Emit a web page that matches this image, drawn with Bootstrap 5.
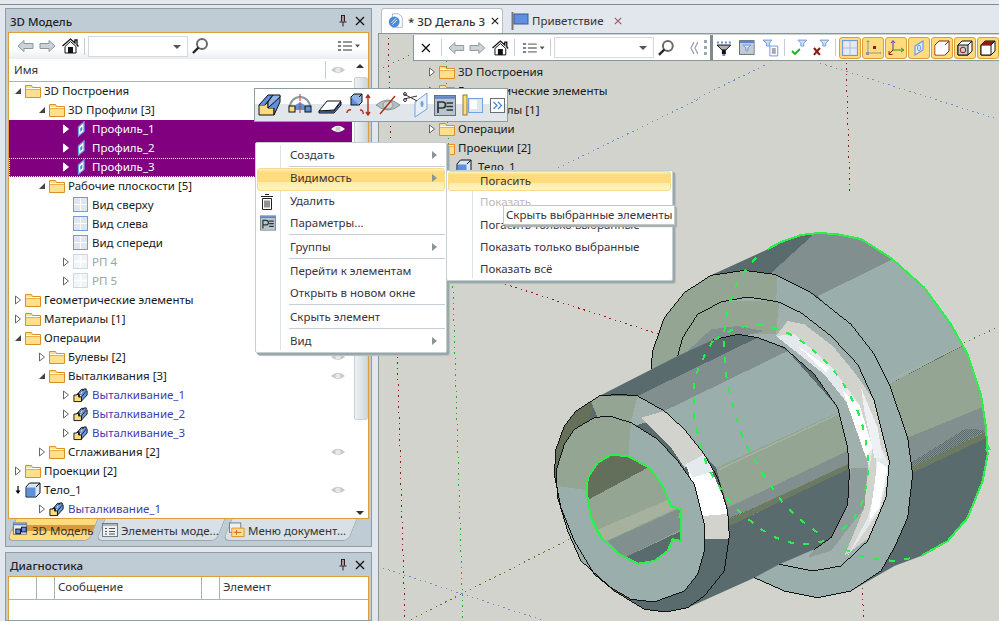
<!DOCTYPE html>
<html lang="ru">
<head>
<meta charset="utf-8">
<title>3D Модель</title>
<link href="https://cdn.jsdelivr.net/npm/bootstrap@5.3.0/dist/css/bootstrap.min.css" rel="stylesheet">
<style>
html,body{margin:0;height:621px;overflow:hidden}
body{position:relative;width:999px;background:#e1e7ec;font:11.5px/19px "Noto Sans",sans-serif;color:#1a1a1a}
.sprite{position:absolute;width:0;height:0}
.topline{height:5px;background:#e4e9ed;border-bottom:1px solid #7f8b8f}
.mainarea{height:616px}
.leftcol{width:378px;padding:3px 6px 0 5px;flex:none}
.rightcol{flex:1;padding-top:3px;min-width:0}
.pane{border:1px solid #8e9da2;background:#bfccd6;padding:0 2px;overflow:hidden}
.pane1{height:539px}
.pane2{height:69px;margin-top:5px}
.pane2 .orangebox{height:46px;border-bottom:0}
.panehead{height:23px;font-weight:500;padding:1px 4px 0 2px;color:#222}
.panehead svg{margin-left:8px}
.orangebox{border:1px solid #dc9d3c;background:#fff;height:487px;position:relative;overflow:hidden}
.tb1{height:26px;background:linear-gradient(#fff 0,#fff 60%,#e9edf0 100%)}
.sepv{width:1px;height:17px;background:#c4ced3;flex:none}
.combo{border:1px solid #d3d9dc;height:21px;width:100px;flex:none;background:#fff;position:relative}
.combo::after{content:"";position:absolute;right:6px;top:8px;border:4px solid transparent;border-top-color:#555;border-bottom:0}
.sp2{margin-left:2px}.sp3{margin-left:3px}.sp4{margin-left:4px}.sp5{margin-left:5px}.sp6{margin-left:6px}.sp7{margin-left:7px}.sp8{margin-left:8px}.sp10{margin-left:10px}.sp16{margin-left:16px}
.namehead{height:23px;border-bottom:1px solid #a7b5b5;width:343px;padding-left:5px;padding-bottom:1px;color:#333}
.namehead .sepv{height:18px;margin-left:auto;margin-right:4px}
.namehead svg{margin-right:6px}
.treebox{width:343px}
.treerow{height:19px;display:flex;align-items:center;white-space:nowrap;padding-left:calc(1px + 24px*var(--lv));padding-bottom:2px}
.arrowbox{width:15px;height:17px;flex:none;display:flex;align-items:center;justify-content:center}
.treerow .ico{flex:none;margin-right:3px}
.eyeico{margin-left:auto;margin-right:6px;flex:none}
.selrow{background:#800080;color:#fff}
.focusrow{outline:1px dotted #fff;outline-offset:-1px}
.linked{color:#3d3daf}
.greyed{color:#9aa4a8}
.vscroll{position:absolute;left:343px;top:26px;width:17px;bottom:0;background:#fff}
.vthumb{position:absolute;left:2px;top:18px;width:14px;height:343px;background:linear-gradient(90deg,#eef1f3,#dfe5e8 50%,#cfd7da);border:1px solid #c9d2d6;border-radius:2px}
.vup,.vdown{position:absolute;left:4px;border:4px solid transparent}
.vup{top:5px;border-bottom-color:#333;border-top:0}
.vdown{bottom:3px;border-top-color:#333;border-bottom:0}
.tabstrip{height:23px;position:relative;z-index:1}
.btab{position:relative;height:22px;display:flex;align-items:center;gap:3px;padding-left:5px;white-space:nowrap;color:#333;flex:none}
.btab::before{content:"";position:absolute;inset:0 3px 0 3px;transform:skewX(-22deg);background:#d9e1e6;border:1px solid #9aa9ad;border-top:0;border-radius:0 0 6px 6px;z-index:-1}
.btab.act::before{background:linear-gradient(#fedc7e 0,#fedc7e 30%,#d99a3f 30%,#d99a3f 55%,#fedc7e 55%)}
.bt1{width:89px}.bt2{width:127px}.bt3{width:132px}
.diaghead{height:23px;border-bottom:1px solid #a7b5b5;color:#333}
.diaghead div{border-right:1px solid #a7b5b5;height:22px;padding-left:3px;flex:none}
.dc1{width:28px}.dc2{width:18px}.dc3{width:147px}
.doctabs{height:25px;background:#e1e7ec;padding-left:3px;gap:3px}
.dtab{height:25px;display:flex;align-items:center;gap:3px;white-space:nowrap;color:#333;flex:none;padding:0 6px 0 5px}
.dtab.act{background:#fff;border:1px solid #b4c0c4;border-bottom:0;border-radius:3px 3px 0 0;width:122px;margin-top:1px;font-weight:500;padding-right:3px}
.canvasarea{position:relative;height:588px;background:#d2d3cd;border-top:1px solid #8a979a;border-left:1px solid #8a979a;overflow:hidden}
.canvasart{position:absolute;left:0;top:0;shape-rendering:crispEdges}
.tb2{position:absolute;left:34px;top:1px;right:0;height:26px;background:#fff;border-left:1px solid #8a979a;border-bottom:1px solid #8a979a;overflow:hidden}
.thicksep{width:3px;height:26px;background:#7f8b8e;flex:none}
.orbtn{width:22px;height:22px;flex:none;background:#fedc7e;border:1px solid #dd9d3a;border-radius:3px;display:flex;align-items:center;justify-content:center}
.orgroup{gap:1px}
.canvastree{position:absolute;left:45px;top:28px;width:240px}
.canvastree .treerow{padding-left:0;padding-bottom:0}
.canvastree .arrowbox{height:19px}
.arrowwide{width:17px}
.minibar{position:absolute;left:254px;top:88px;width:254px;height:34px;background:linear-gradient(#fff 0,#fff 47%,#e0e6ea 47%);border:1px solid #8e9da2;z-index:5}
.ctxmenu{position:absolute;background:#fff;border:1px solid #c5ced3;border-radius:2px;box-shadow:2px 2px 0 #9aa7a9,3px 3px 1px #b6bfc0;z-index:4;color:#3a3340}
.ctx1{left:255px;top:142px;width:192px;height:211px}
.ctx2{left:446px;top:170px;width:227px;height:111px;z-index:6}
.gutter{position:absolute;top:2px;bottom:2px;width:1px;background:#dde4e8}
.ctx1 .gutter{left:24px}
.ctx2 .gutter{left:25px}
.mitem{position:absolute;left:34px;white-space:nowrap;height:19px}
.ctx2 .mitem{left:33px}
.msep{position:absolute;left:33px;right:1px;height:1px;background:#c5d0d6}
.msub{position:absolute;right:9px;border:4px solid transparent;border-left:5px solid #8a9599;border-right:0}
.hlrow{position:absolute;left:1px;right:1px;background:linear-gradient(#fff0bd 0,#fedc7e 15%,#fedc7e 60%,#ffeaa8 60%,#fff3c8);border:1px solid #fbd98a;border-radius:3px}
.ctip{position:absolute;left:503px;top:205px;width:172px;height:20px;background:#fff;border:1px solid #c5c5c5;box-shadow:2px 2px 1px #a9b0b0;z-index:7;padding-left:2px;white-space:nowrap;color:#3a3340;line-height:18px}
.mico{position:absolute;left:4px}
.r1{top:2px}.r2{top:25px}.r3{top:48px}.r4{top:70px}.r5{top:94px}.r6{top:118px}.r7{top:140px}.r8{top:164px}.r9{top:188px}
.a1{top:8px}.a2{top:31px}.a5{top:100px}.a9{top:194px}
.s1{top:23px}.s2{top:91px}.s3{top:115px}.s4{top:161px}.s5{top:185px}
.h1{top:25px;height:23px}.h2{top:0;height:20px}
.i1{top:50px}.i2{top:72px}
.q1{top:0}.q2{top:21px;color:#bbb}.q3{top:44px}.q4{top:66px}.q5{top:88px}
.c-red{stroke:#8a1f10}.c-lime{stroke:#1fb01f}.c-olive{stroke:#4f7a2f}.c-blue{stroke:#6f8ec8}
</style>
</head>
<body>
<svg class="sprite" aria-hidden="true">
<defs>
<symbol id="i-folder" viewBox="0 0 16 14"><path d="M.5 1.500h6l1 2h8v10H.5z" fill="#fedf8e" stroke="#dc8f24"/><path d="M1 4.500h14" stroke="#fff"/><path d="M1 5.500h14" stroke="#dc8f24" opacity=".6"/></symbol>
<symbol id="i-prof" viewBox="0 0 16 16"><path d="M5.500 6 11 1v9.500L5.500 15z" fill="#fff" stroke="#6ea3e8" stroke-width="1.300"/><path d="M7.300 7.500 9.300 5.500v3.500L7.300 11z" fill="#3f78d0"/></symbol>
<symbol id="i-plane" viewBox="0 0 16 16"><rect x=".5" y=".5" width="14" height="14" fill="#dfe6ed" stroke="#6f9be5"/><path d="M7.500 1v13M1 7.500h13" stroke="#fff"/></symbol>
<symbol id="i-planeg" viewBox="0 0 16 16"><rect x=".5" y=".5" width="14" height="14" fill="#f1f4f6" stroke="#cfd8de"/><path d="M7.500 1v13M1 7.500h13" stroke="#fff" stroke-width="1.500"/></symbol>
<symbol id="i-extr" viewBox="0 0 17 16"><path d="M1 8h3l2-2v4h3v5H1z" fill="#fedc7e" stroke="#111"/><path d="M4 8 9 2h3l-5 6v2H6V6z" fill="#6b98dc" stroke="#111"/><path d="M9 10 14 4V1.500h-2L7.500 7M9 10v4.500L15 8V3.500" fill="#6b98dc" stroke="#111"/><path d="M10 4 8 7" stroke="#fff"/></symbol>
<symbol id="i-cube" viewBox="0 0 16 16"><path d="M1 5h10v10H1z" fill="#5f90d9" stroke="#111"/><path d="M1 5l3.500-4H15v10l-4 4M11 5l4-4" fill="#dbe6f4" stroke="#111"/><path d="M1.500 5.500h9v9h-9z" fill="#5f90d9"/></symbol>
<symbol id="i-eye" viewBox="0 0 16 10"><path d="M1 5q7-6.500 14 0-7 6.500-14 0z" fill="#c6cbc5"/><circle cx="8" cy="5" r="2.600" fill="#e6e9e3"/></symbol>
<symbol id="i-eyew" viewBox="0 0 16 10"><path d="M1 5q7-6.500 14 0-7 6.500-14 0z" fill="#fff"/><circle cx="8" cy="5" r="2.600" fill="#c9cfc9"/></symbol>
<symbol id="i-closed" viewBox="0 0 8 10"><path d="M1.500 1v8L6.500 5z" fill="#fff" stroke="#666"/></symbol>
<symbol id="i-closedw" viewBox="0 0 8 10"><path d="M1.500 1v8L6.500 5z" fill="#fff" stroke="#fff"/></symbol>
<symbol id="i-open" viewBox="0 0 8 10"><path d="M1 8h6V2z" fill="#444"/></symbol>
<symbol id="i-down" viewBox="0 0 8 10"><path d="M4 1v6" stroke="#000" stroke-width="1.200"/><path d="M1.500 5.500h5L4 9z" fill="#000"/></symbol>
<symbol id="i-back" viewBox="0 0 17 14"><path d="M1 7l6-5.500V4.500h9v5H7v3z" fill="#cbd3d8" stroke="#8c989c"/></symbol>
<symbol id="i-fwd" viewBox="0 0 17 14"><path d="M16 7l-6-5.500V4.500H1v5h9v3z" fill="#cbd3d8" stroke="#8c989c"/></symbol>
<symbol id="i-home" viewBox="0 0 17 16"><path d="M.5 8 8.500 1 13 5V2h2v5l1.500 1.500" fill="none" stroke="#111" stroke-width="1.300"/><path d="M3 8.500 8.500 3.500 14 8.500V15H3z" fill="#fff" stroke="#111"/><path d="M6 9h5v6H6z" fill="#111"/></symbol>
<symbol id="i-search" viewBox="0 0 18 18"><circle cx="11" cy="7" r="5" fill="#fff" stroke="#6a6a6a" stroke-width="2"/><path d="M7.500 10.500 2 16" stroke="#222" stroke-width="2.400"/></symbol>
<symbol id="i-list" viewBox="0 0 23 12"><path d="M1 2h3M1 6h3M1 10h3" stroke="#555" stroke-width="1.500"/><path d="M6 2h9M6 6h9M6 10h9" stroke="#777" stroke-width="1.300"/><path d="M18 4.500h5L20.500 7.500z" fill="#555"/></symbol>
<symbol id="i-close" viewBox="0 0 10 10"><path d="M1 1l8 8M9 1 1 9" stroke="#111" stroke-width="1.300"/></symbol>
<symbol id="i-pin" viewBox="0 0 8 12"><path d="M2 .5h4M2.500 .5v6M5.500 .5v6M.5 7h7M4 7v4.500" stroke="#222" fill="none"/><path d="M4 1v5.500" stroke="#d44"/></symbol>
<symbol id="i-pe" viewBox="0 0 22 21"><rect x=".5" y=".5" width="21" height="20" fill="#b9c4ca" stroke="#65727a"/><path d="M1 2.500h20" stroke="#5a84d0" stroke-width="2.500"/><path d="M4 18V7h4.500a2.500 2.500 0 0 1 0 6H4.500M12.500 8H19M12.500 11.500H19M12.500 15H19" fill="none" stroke="#2c353a" stroke-width="1.700"/></symbol>
<symbol id="i-trash" viewBox="0 0 14 17"><path d="M5 1.500h4M1 3.500h12M2.500 5.500h9v11h-9zM5 7.500v7M7 7.500v7M9 7.500v7" fill="none" stroke="#222"/></symbol>
<symbol id="i-cfilter" viewBox="0 0 16 16"><path d="M1 2.500h14" stroke="#5f90d9" stroke-width="2" stroke-dasharray="2 2"/><path d="M1 5h14L10 10H6z" fill="#aab0ae" stroke="#111"/><path d="M6 10h4v4H6z" fill="#111"/><path d="M6.500 15h3" stroke="#5f90d9" stroke-width="2"/></symbol>
<symbol id="i-filter2" viewBox="0 0 16 16"><rect x=".5" y=".5" width="15" height="14" fill="#c5ccd0" stroke="#65727a"/><path d="M1 2h14" stroke="#5a84d0" stroke-width="2"/><path d="M4 5h8L9 8v3H7V8z" fill="#d6e0ea" stroke="#6f9be5"/></symbol>
<symbol id="i-filter3" viewBox="0 0 18 18"><path d="M1 1h9L7.500 4v3h-3V4z" fill="#d6e0ea" stroke="#6f9be5"/><path d="M8 7h8v10H8z" fill="#fff" stroke="#6f9be5"/><path d="M10 10h4M10 12h4M10 14h4" stroke="#555"/></symbol>
<symbol id="i-fcheck" viewBox="0 0 18 18"><path d="M7 1h9l-3 3v3h-3V4z" fill="#d6e0ea" stroke="#6f9be5"/><path d="M1 12l3 3 5-5" fill="none" stroke="#1fb51f" stroke-width="2"/></symbol>
<symbol id="i-fx" viewBox="0 0 18 18"><path d="M8 1h9l-3 3v3h-3V4z" fill="#d6e0ea" stroke="#6f9be5"/><path d="M2 9l6 7M8 9l-6 7" stroke="#8a1f10" stroke-width="2.200"/></symbol>
<symbol id="v-top" viewBox="0 0 16 16"><rect x=".5" y=".5" width="15" height="15" fill="#e4eaef" stroke="#6f9be5" stroke-width="1.200"/><path d="M8 1v14M1 8h14" stroke="#6f9be5" opacity=".5"/></symbol>
<symbol id="v-axis" viewBox="0 0 16 16"><path d="M3 13V2M3 13h12" stroke="#8c989c"/><path d="M1 2h4L3 0zM15 11v4l1-2z" fill="#8c989c"/><path d="M1 12h3v3H1z" fill="#8c989c"/><rect x="8" y="6" width="3" height="3" fill="#8a1f10"/></symbol>
<symbol id="v-xyz" viewBox="0 0 16 16"><path d="M5 10V2" stroke="#4a3aa8"/><path d="M3 3l2-2.500L7 3" fill="none" stroke="#4a3aa8"/><path d="M5 10h10" stroke="#2f962f"/><path d="M13 8l3 2-3 2" fill="none" stroke="#2f962f"/><path d="M5 10 1 14M1 11v3.500h3.500" fill="none" stroke="#8a1f10"/></symbol>
<symbol id="v-pln" viewBox="0 0 16 16"><path d="M4 6l8-5v9l-8 5z" fill="#e4eaef" stroke="#6f9be5" stroke-width="1.200"/><ellipse cx="8" cy="8" rx="1.500" ry="3" fill="none" stroke="#6f9be5"/></symbol>
<symbol id="v-cb1" viewBox="0 0 16 16"><path d="M1 5h10v10H1z" fill="#fff" stroke="#8a1f10"/><path d="M1 5l4-4h10v10l-4 4M11 5l4-4" fill="#fff" stroke="#8a1f10"/><path d="M1.500 5.500h9v9h-9z" fill="#fff"/></symbol>
<symbol id="v-cb2" viewBox="0 0 16 16"><path d="M5 1h10v10l-4 4H1V5z" fill="#fff" stroke="#111"/><path d="M1 5h10v10H1z" fill="#c7cdcf" stroke="#111"/><circle cx="6" cy="10" r="2.800" fill="none" stroke="#8a1f10"/><path d="M11 5l4-4" stroke="#111"/></symbol>
<symbol id="v-cb3" viewBox="0 0 16 16"><path d="M5 1h10v10l-4 4H1V5z" fill="#fff" stroke="#111"/><path d="M1 5h10v10H1z" fill="#fff" stroke="#111"/><path d="M5 1h10L11 5H1z" fill="#8a1f10"/><path d="M11 5l4-4" stroke="#111"/></symbol>
</defs>
</svg>

<div class="topline"></div>
<div class="mainarea d-flex">
  <div class="leftcol">
    <div class="pane pane1">
      <div class="panehead d-flex align-items-center"><span class="flex-grow-1">3D Модель</span><svg width="8" height="12"><use href="#i-pin"/></svg><svg width="10" height="10"><use href="#i-close"/></svg></div>
      <div class="orangebox">
        <div class="tb1 d-flex align-items-center">
          <svg class="sp8" width="17" height="14"><use href="#i-back"/></svg>
          <svg class="sp5" width="17" height="14"><use href="#i-fwd"/></svg>
          <svg class="sp6" width="17" height="16"><use href="#i-home"/></svg>
          <span class="sepv sp5"></span>
          <div class="combo sp3"></div>
          <svg class="sp3" width="18" height="18"><use href="#i-search"/></svg>
          <svg class="ms-auto me-2" width="23" height="12"><use href="#i-list"/></svg>
        </div>
        <div class="namehead d-flex align-items-center"><span>Имя</span><span class="sepv"></span><svg width="16" height="10"><use href="#i-eye"/></svg></div>
        <div class="treebox">
          <div class="treerow" style="--lv:0"><span class="arrowbox"><svg width="8" height="10"><use href="#i-open"/></svg></span><svg class="ico" width="16" height="14"><use href="#i-folder"/></svg>3D Построения</div>
          <div class="treerow" style="--lv:1"><span class="arrowbox"><svg width="8" height="10"><use href="#i-open"/></svg></span><svg class="ico" width="16" height="14"><use href="#i-folder"/></svg>3D Профили [3]</div>
          <div class="treerow selrow" style="--lv:2"><span class="arrowbox"><svg width="8" height="10"><use href="#i-closedw"/></svg></span><svg class="ico" width="16" height="16"><use href="#i-prof"/></svg>Профиль_1<svg class="eyeico" width="16" height="10"><use href="#i-eyew"/></svg></div>
          <div class="treerow selrow" style="--lv:2"><span class="arrowbox"><svg width="8" height="10"><use href="#i-closedw"/></svg></span><svg class="ico" width="16" height="16"><use href="#i-prof"/></svg>Профиль_2</div>
          <div class="treerow selrow focusrow" style="--lv:2"><span class="arrowbox"><svg width="8" height="10"><use href="#i-closedw"/></svg></span><svg class="ico" width="16" height="16"><use href="#i-prof"/></svg>Профиль_3</div>
          <div class="treerow" style="--lv:1"><span class="arrowbox"><svg width="8" height="10"><use href="#i-open"/></svg></span><svg class="ico" width="16" height="14"><use href="#i-folder"/></svg>Рабочие плоскости [5]</div>
          <div class="treerow" style="--lv:2"><span class="arrowbox"></span><svg class="ico" width="16" height="16"><use href="#i-plane"/></svg>Вид сверху</div>
          <div class="treerow" style="--lv:2"><span class="arrowbox"></span><svg class="ico" width="16" height="16"><use href="#i-plane"/></svg>Вид слева</div>
          <div class="treerow" style="--lv:2"><span class="arrowbox"></span><svg class="ico" width="16" height="16"><use href="#i-plane"/></svg>Вид спереди</div>
          <div class="treerow greyed" style="--lv:2"><span class="arrowbox"><svg width="8" height="10"><use href="#i-closed"/></svg></span><svg class="ico" width="16" height="16"><use href="#i-planeg"/></svg>РП 4</div>
          <div class="treerow greyed" style="--lv:2"><span class="arrowbox"><svg width="8" height="10"><use href="#i-closed"/></svg></span><svg class="ico" width="16" height="16"><use href="#i-planeg"/></svg>РП 5</div>
          <div class="treerow" style="--lv:0"><span class="arrowbox"><svg width="8" height="10"><use href="#i-closed"/></svg></span><svg class="ico" width="16" height="14"><use href="#i-folder"/></svg>Геометрические элементы</div>
          <div class="treerow" style="--lv:0"><span class="arrowbox"><svg width="8" height="10"><use href="#i-closed"/></svg></span><svg class="ico" width="16" height="14"><use href="#i-folder"/></svg>Материалы [1]</div>
          <div class="treerow" style="--lv:0"><span class="arrowbox"><svg width="8" height="10"><use href="#i-open"/></svg></span><svg class="ico" width="16" height="14"><use href="#i-folder"/></svg>Операции</div>
          <div class="treerow" style="--lv:1"><span class="arrowbox"><svg width="8" height="10"><use href="#i-closed"/></svg></span><svg class="ico" width="16" height="14"><use href="#i-folder"/></svg>Булевы [2]<svg class="eyeico" width="16" height="10"><use href="#i-eye"/></svg></div>
          <div class="treerow" style="--lv:1"><span class="arrowbox"><svg width="8" height="10"><use href="#i-open"/></svg></span><svg class="ico" width="16" height="14"><use href="#i-folder"/></svg>Выталкивания [3]<svg class="eyeico" width="16" height="10"><use href="#i-eye"/></svg></div>
          <div class="treerow linked" style="--lv:2"><span class="arrowbox"><svg width="8" height="10"><use href="#i-closed"/></svg></span><svg class="ico" width="16" height="16"><use href="#i-extr"/></svg>Выталкивание_1</div>
          <div class="treerow linked" style="--lv:2"><span class="arrowbox"><svg width="8" height="10"><use href="#i-closed"/></svg></span><svg class="ico" width="16" height="16"><use href="#i-extr"/></svg>Выталкивание_2</div>
          <div class="treerow linked" style="--lv:2"><span class="arrowbox"><svg width="8" height="10"><use href="#i-closed"/></svg></span><svg class="ico" width="16" height="16"><use href="#i-extr"/></svg>Выталкивание_3</div>
          <div class="treerow" style="--lv:1"><span class="arrowbox"><svg width="8" height="10"><use href="#i-closed"/></svg></span><svg class="ico" width="16" height="14"><use href="#i-folder"/></svg>Сглаживания [2]<svg class="eyeico" width="16" height="10"><use href="#i-eye"/></svg></div>
          <div class="treerow" style="--lv:0"><span class="arrowbox"><svg width="8" height="10"><use href="#i-closed"/></svg></span><svg class="ico" width="16" height="14"><use href="#i-folder"/></svg>Проекции [2]</div>
          <div class="treerow" style="--lv:0"><span class="arrowbox"><svg width="8" height="10"><use href="#i-down"/></svg></span><svg class="ico" width="16" height="16"><use href="#i-cube"/></svg>Тело_1<svg class="eyeico" width="16" height="10"><use href="#i-eye"/></svg></div>
          <div class="treerow linked" style="--lv:1"><span class="arrowbox"><svg width="8" height="10"><use href="#i-closed"/></svg></span><svg class="ico" width="16" height="16"><use href="#i-extr"/></svg>Выталкивание_1</div>
        </div>
        <div class="vscroll"><span class="vup"></span><div class="vthumb"></div><span class="vdown"></span></div>
      </div>
      <div class="tabstrip d-flex">
        <div class="btab act bt1"><svg width="16" height="16" viewBox="0 0 17 16"><rect x=".5" y=".5" width="14" height="12" fill="#e6ebee" stroke="#6d7b82"/><path d="M1 2h13" stroke="#5a84d0" stroke-width="2"/><rect x="3" y="7" width="5" height="5" fill="#5f90d9" stroke="#111"/><rect x="9" y="5" width="5" height="5" fill="#5f90d9" stroke="#111"/></svg>3D Модель</div>
        <div class="btab bt2"><svg width="16" height="14" viewBox="0 0 16 14"><rect x=".5" y=".5" width="15" height="13" fill="#eef1f3" stroke="#6d7b82"/><path d="M1 2h14" stroke="#6d7b82"/><path d="M3 5.500h2M7 5.500h6M3 8.500h2M7 8.500h6M3 11h2M7 11h6" stroke="#555"/></svg>Элементы моде...</div>
        <div class="btab bt3"><svg width="16" height="16" viewBox="0 0 17 16"><rect x=".5" y=".5" width="12" height="10" fill="#eef1f3" stroke="#6d7b82"/><path d="M3 6h13v9H3z" fill="#fedf8e" stroke="#dc8f24"/><path d="M8 8v5M5 10.500h8" stroke="#c0641c"/></svg>Меню документ...</div>
      </div>
    </div>
    <div class="pane pane2">
      <div class="panehead d-flex align-items-center"><span class="flex-grow-1">Диагностика</span><svg width="8" height="12"><use href="#i-pin"/></svg><svg width="10" height="10"><use href="#i-close"/></svg></div>
      <div class="orangebox">
        <div class="diaghead d-flex">
          <div class="dc1"></div><div class="dc2"></div><div class="dc3">Сообщение</div><div class="dc2"></div><div class="flex-grow-1 border-0">Элемент</div>
        </div>
      </div>
    </div>
  </div>

  <div class="rightcol">
    <div class="doctabs d-flex align-items-end">
      <div class="dtab act"><svg width="18" height="18" viewBox="0 0 20 18"><path d="M6 1h7l4 4v11H6z" fill="#fff" stroke="#9fb4cf"/><circle cx="8" cy="10" r="6" fill="#4c8ad8"/><path d="M5 11l5-5M6 13l5-5" stroke="#fff"/></svg><span>* 3D Деталь 3</span><svg class="ms-auto" width="8" height="8" viewBox="0 0 10 10"><use href="#i-close"/></svg></div>
      <div class="dtab"><svg width="18" height="18" viewBox="0 0 18 18"><path d="M1.500 0v18" stroke="#777" stroke-width="2"/><rect x="3" y="2" width="14" height="10" fill="#5f90e0" stroke="#3a5aa0"/></svg><span>Приветствие</span><svg class="sp8" width="8" height="8" viewBox="0 0 10 10"><path d="M1 1l8 8M9 1 1 9" stroke="#a05060" stroke-width="1.300"/></svg></div>
    </div>
    <div class="canvasarea">
      <svg class="canvasart" width="621" height="588" viewBox="378 33 621 588" aria-hidden="true">
        <g fill="none" stroke-dasharray="1.500 4">
          <path class="c-red" d="M387 37 404 621"/>
          <path class="c-red" d="M845 62 849 190"/>
          <path class="c-red" d="M861 587 863 621"/>
          <path class="c-red" d="M504 283 657 333"/>
          <path class="c-olive" d="M382 67 413 52"/>
          <path class="c-lime" d="M445 60 462 621"/>
          <path class="c-olive" d="M963 342 999 325"/>
          <path class="c-olive" d="M405 621 575 535"/>
          <path class="c-blue" d="M693 99 766 63M819 62 996 118M557 167 698 98"/>
          <path class="c-blue" d="M382 567 547 621"/>
        </g>
        <defs>
          <clipPath id="cBody"><path d="M360 385 365 330 400 230 460 155 540 103 710 25 750 3 810 -18 861 -24 915 -21 990 -6 1080 51 1180 140 1260 250 1310 340 1350 460 1365 560 1370 640 1355 720 1310 830 1250 900 1170 945 1090 975 960 1050 860 1070 760 1050 670 1010z"/></clipPath>
          <clipPath id="cFlange"><path d="M360 385 365 330 400 230 460 155 540 103 640 88 730 100 840 155 960 250 1030 340 1075 430 1130 590 1145 700 1130 830 1090 920 1050 990 960 1050 860 1070 760 1050 670 1010z"/></clipPath>
          <clipPath id="cCav"><path d="M440 345 455 290 500 220 570 183 650 168 740 182 810 215 900 285 980 370 1030 480 1075 660 1065 770 1010 900 930 975 845 990 745 970z"/></clipPath>
          <clipPath id="cShaft"><path d="M205 465 440 345 545 297 620 280 680 290 760 320 850 400 920 500 950 620 955 700 950 790 900 890 850 925 745 970 670 1010 470 1100z"/></clipPath>
          <clipPath id="cFront"><path d="M70 700 75 625 100 555 135 510 205 465 265 460 320 465 400 510 460 565 520 640 560 710 590 810 595 885 580 990 520 1065 470 1100 405 1113 340 1105 250 1050 190 1000 130 900 90 800z"/></clipPath>
          <clipPath id="cHole"><path d="M168 760 170 710 200 665 240 642 290 645 355 680 395 735 420 795 450 805 450 900 425 895 410 930 370 960 320 968 265 940 210 890 180 830z"/></clipPath>
          <pattern id="dith" width="6" height="6" patternUnits="userSpaceOnUse"><rect width="6" height="6" fill="#828f8f"/><rect width="3" height="3" fill="#5a6b6d"/><rect x="3" y="3" width="3" height="3" fill="#5a6b6d"/></pattern>
        </defs>
        <g transform="translate(530 240) scale(.33333)">
          <g clip-path="url(#cBody)">
            <rect x="340" y="-40" width="1040" height="1120" fill="#5a6b6d"/>
            <path d="M720 96 861 165 1085 55 939 -40 870 -40z" fill="#828f8f"/>
            <path d="M861 165 1085 55 1400 230 1400 255 1075 430z" fill="#9aafab"/>
            <path d="M1075 430 1400 260 1400 480 1130 590z" fill="#95a594"/>
            <path d="M1080 418 1295 312" stroke="#a5b3a2" stroke-width="4"/>
            <path d="M1130 590 1400 480 1400 555 1140 680z" fill="#828f8f"/>
            <path d="M1140 665 1300 565 1340 565 1365 570 1145 680z" fill="url(#dith)"/>
            <path d="M1140 680 1400 555 1400 575 1145 695z" fill="#6d7a62"/>
          </g>
          <g clip-path="url(#cFlange)">
            <rect x="340" y="80" width="820" height="1000" fill="#9aafab"/>
            <path d="M350 80H740L735 200 650 300 440 400 350 400z" fill="#95a594"/>
          </g>
          <g clip-path="url(#cCav)">
            <rect x="430" y="160" width="660" height="840" fill="#9fb0ad"/>
            <path d="M430 350 480 220 580 180 745 180 735 280 620 280 430 360z" fill="#95a594"/>
            <path d="M470 330 540 265 620 255 700 270 620 290 480 340z" fill="#828f8f"/>
            <path d="M735 285 770 240 820 250 905 315 975 400 1030 480 1078 660 1065 770 1015 890 940 945 1000 800 1012 670 975 520 905 400 830 330z" fill="#d2d3cd"/>
            <path d="M735 285 790 280 900 375 985 490 1025 620 1015 680 960 500 880 400z" fill="#e3e9ec"/>
            <path d="M800 315 895 380 885 395z M935 450 985 490 1025 620 1005 650z" fill="#fff"/>
            <path d="M1025 560 1078 680 1045 810 950 945 1010 830 1040 720z" fill="#e3e9ec"/>
            <path d="M1040 660 1070 680 1045 800 1015 840z" fill="#fff"/>
            <path d="M990 440 1040 560 1055 650 1030 650 1000 510z" fill="#eef1f3"/>
            <path d="M960 680 1010 680 1000 800 900 930 830 950 950 800z" fill="#8e9c9c"/>
          </g>
          <g clip-path="url(#cShaft)">
            <rect x="200" y="270" width="770" height="840" fill="#5a6b6d"/>
            <path d="M320 465 690 285 770 330 400 510z" fill="#828f8f"/>
            <path d="M400 510 770 330 930 510 555 680z" fill="#9aafab"/>
            <path d="M555 680 930 510 960 625 590 800z" fill="#95a594"/>
            <path d="M565 685 930 515" stroke="#a5b3a2" stroke-width="4"/>
            <path d="M590 800 960 625 960 665 595 835z" fill="#828f8f"/>
            <path d="M595 830 670 800 690 810 595 855z" fill="url(#dith)"/>
            <path d="M595 835 960 665 960 680 595 855z" fill="#6d7a62"/>
          </g>
          <g clip-path="url(#cFront)">
            <rect x="60" y="450" width="550" height="670" fill="#5a6b6d"/>
            <path d="M60 450H205L175 530 80 680 60 720z" fill="#656f5a"/>
            <path d="M175 470 205 465 320 465 295 560 200 530z" fill="#95a594"/>
            <path d="M320 465 400 510 460 565 340 545 295 560z" fill="#9fb0ad"/>
            <path d="M330 530 400 510 470 575 530 650 460 680 420 620z" fill="#d2d3cd"/>
            <path d="M465 670 520 640 600 820 515 830z" fill="#fff"/>
            <path d="M465 670 520 640 550 690 485 710z" fill="#e3e9ec"/>
            <path d="M515 825 600 818 600 900 520 900z" fill="#d2d3cd"/>
            <path d="M520 895 600 895 580 990 520 1065 470 1100 405 1113 500 1000z" fill="#5a6b6d"/>
          </g>
          <path d="M75 690 100 610 130 565 190 530 235 525 300 545 380 595 440 660 490 730 520 850 520 930 500 1000 460 1050 370 1083 300 1075 240 1040 150 960 110 870 80 770z" fill="#9aafab"/>
          <path d="M78 680 100 610 130 565 190 530 235 525 300 545 295 600 296 755 200 760 150 745 78 735z" fill="#95a594"/>
          <path d="M168 760 170 710 200 665 240 642 290 645 355 680 395 735 420 795 450 805 450 900 425 895 410 930 370 960 320 968 265 940 210 890 180 830z" fill="#95a594"/>
          <g clip-path="url(#cHole)">
            <path d="M160 630H360L360 675 165 780z" fill="#636f5a"/>
            <path d="M190 870 450 760 460 790 215 905z" fill="#a7b29e"/>
            <path d="M230 900 450 800 460 860 280 950z" fill="#828f8f"/>
            <path d="M280 950 450 870 450 900 400 960 320 975z" fill="#5a6b6d"/>
          </g>
          <g fill="none" stroke="#111" stroke-width="3">
            <path d="M360 385 365 330 400 230 460 155 540 103 640 88 730 100 840 155 960 250 1030 340 1075 430 1130 590 1145 700 1130 830 1090 920 1050 990 960 1050 860 1070 760 1050 670 1010"/>
            <path d="M440 345 455 290 500 220 570 183 650 168 740 182 810 215 900 285 980 370 1030 480 1075 660 1065 770 1010 900 930 975 845 990 745 970"/>
            <path d="M545 297 620 280 680 290 760 320 850 400 920 500 950 620 955 700 950 790 900 890 850 925"/>
            <path d="M70 700 75 625 100 555 135 510 205 465 265 460 320 465 400 510 460 565 520 640 560 710 590 810 595 885 580 990 520 1065 470 1100 405 1113 340 1105 250 1050 190 1000 130 900 90 800 70 700"/>
            <path d="M75 690 100 610 130 565 190 530 235 525 300 545 380 595 440 660 490 730 520 850 520 930 500 1000 460 1050 370 1083 300 1075 240 1040 150 960 110 870 80 770 75 690"/>
          </g>
          <g fill="none" stroke="#2cf04a" stroke-width="6">
            <path d="M168 760 170 710 200 665 240 642 290 645 355 680 395 735 420 795 450 805 450 900 425 895 410 930 370 960 320 968 265 940 210 890 180 830 168 760"/>
            <path d="M711 24 750 3 810 -18 861 -24 915 -21 990 -6 1080 51 1180 140 1260 250 1310 340 1350 460 1365 560 1370 640 1355 720 1310 830 1250 900 1170 945"/>
            <g stroke-dasharray="18 28">
              <path d="M675 50 630 105 605 155 590 210 580 270 580 340 585 400 595 450 610 510 635 590 660 640 690 690 720 735 755 785 800 830 860 875"/>
              <path d="M545 300 520 345 490 410 488 480 490 540 515 630 530 680 560 730 595 780 640 825 690 865 735 890 780 905 830 910 880 900 900 895"/>
              <path d="M550 297 600 268 650 253 700 253 745 265 795 288 840 322 890 368 930 415 955 460 980 510 995 555 1005 605 1012 650 1010 700 1000 770 970 830 920 880"/>
              <path d="M940 925 990 945 1040 955 1090 960 1150 950"/>
            </g>
          </g>
          <path d="M1362 628 1370 605 1380 628z M442 830 449 805 456 830z" fill="#2cf04a"/>
        </g>
      </svg>

      <div class="canvastree">
        <div class="treerow"><span class="arrowbox"><svg width="8" height="10"><use href="#i-closed"/></svg></span><svg class="ico" width="16" height="14"><use href="#i-folder"/></svg>3D Построения</div>
        <div class="treerow"><span class="arrowbox"><svg width="8" height="10"><use href="#i-closed"/></svg></span><svg class="ico" width="16" height="14"><use href="#i-folder"/></svg>Геометрические элементы</div>
        <div class="treerow"><span class="arrowbox"><svg width="8" height="10"><use href="#i-closed"/></svg></span><svg class="ico" width="16" height="14"><use href="#i-folder"/></svg>Материалы [1]</div>
        <div class="treerow"><span class="arrowbox"><svg width="8" height="10"><use href="#i-closed"/></svg></span><svg class="ico" width="16" height="14"><use href="#i-folder"/></svg>Операции</div>
        <div class="treerow"><span class="arrowbox"><svg width="8" height="10"><use href="#i-closed"/></svg></span><svg class="ico" width="16" height="14"><use href="#i-folder"/></svg>Проекции [2]</div>
        <div class="treerow"><span class="arrowbox"><svg width="8" height="10"><use href="#i-closed"/></svg></span><span class="arrowwide"></span><svg class="ico" width="16" height="16"><use href="#i-cube"/></svg><span class="sp3">Тело_1</span></div>
      </div>

      <div class="tb2 d-flex align-items-center">
        <svg class="sp7" width="10" height="10"><use href="#i-close"/></svg>
        <span class="sepv sp10"></span>
        <svg class="sp6" width="17" height="14"><use href="#i-back"/></svg>
        <svg class="sp4" width="17" height="14"><use href="#i-fwd"/></svg>
        <svg class="sp7" width="17" height="16"><use href="#i-home"/></svg>
        <span class="sepv sp5"></span>
        <svg class="sp7" width="23" height="12"><use href="#i-list"/></svg>
        <span class="sepv sp5"></span>
        <div class="combo sp3"></div>
        <svg class="sp3" width="18" height="18"><use href="#i-search"/></svg>
        <svg class="sp16" width="9" height="14" viewBox="0 0 9 14"><path d="M4 1 1 7l3 6M8 1 5 7l3 6" fill="none" stroke="#9aa6aa" stroke-width="1.300"/></svg>
        <svg class="sp5" width="3" height="15" viewBox="0 0 3 15"><path d="M1.500 0v15" stroke="#9aa6aa" stroke-width="3" stroke-dasharray="3 3"/></svg>
        <span class="thicksep sp3"></span>
        <svg class="sp3" width="16" height="16"><use href="#i-cfilter"/></svg>
        <svg class="sp7" width="16" height="16"><use href="#i-filter2"/></svg>
        <svg class="sp7" width="18" height="18"><use href="#i-filter3"/></svg>
        <span class="sepv sp4"></span>
        <svg class="sp6" width="18" height="18"><use href="#i-fcheck"/></svg>
        <svg class="sp4" width="18" height="18"><use href="#i-fx"/></svg>
        <span class="sepv sp5"></span>
        <div class="d-flex orgroup sp3">
          <div class="orbtn"><svg width="16" height="16"><use href="#v-top"/></svg></div>
          <div class="orbtn"><svg width="16" height="16"><use href="#v-axis"/></svg></div>
          <div class="orbtn"><svg width="16" height="16"><use href="#v-xyz"/></svg></div>
          <div class="orbtn"><svg width="16" height="16"><use href="#v-pln"/></svg></div>
          <div class="orbtn"><svg width="16" height="16"><use href="#v-cb1"/></svg></div>
          <div class="orbtn"><svg width="16" height="16"><use href="#v-cb2"/></svg></div>
          <div class="orbtn"><svg width="16" height="16"><use href="#v-cb3"/></svg></div>
        </div>
      </div>
    </div>
  </div>
</div>

<div class="minibar d-flex align-items-center">
  <svg class="sp3" width="24" height="24" viewBox="0 0 24 24"><path d="M1 12h6l3-3v6h6v7H1z" fill="#fedc7e" stroke="#111"/><path d="M1 12 10 2h5L7 12M10 15 22 3V9L16 22V15" fill="#5f90d9" stroke="#111"/><path d="M15 2h7v2L10 15V9z" fill="#8fb4e8" stroke="#111"/></svg>
  <svg class="sp6" width="24" height="24" viewBox="0 0 24 24"><path d="M2 14a10 10 0 0 1 20 0" fill="none" stroke="#8c989c" stroke-width="2"/><path d="M7 17a5 6 0 0 1 10 0" fill="#5f90d9" stroke="#5f90d9" stroke-width="2"/><rect x="1" y="13" width="6" height="6" fill="#fedc7e" stroke="#111"/><rect x="17" y="13" width="6" height="6" fill="#5f90d9" stroke="#111"/><path d="M12 1v19" stroke="#b33" stroke-dasharray="3 1"/></svg>
  <svg class="sp6" width="24" height="24" viewBox="0 0 24 24"><path d="M1 18 9 8h14l-7 9z" fill="#fff" stroke="#111"/><path d="M1 18h15l7-9v3l-7 8H1z" fill="#5f90d9" stroke="#111"/></svg>
  <svg class="sp4" width="26" height="24" viewBox="0 0 26 24"><rect x="5" y="4" width="8" height="8" fill="#5f90d9" stroke="#111"/><path d="M5 4l3-3h8v8l-3 3M13 4l3-3" fill="#8fb4e8" stroke="#111"/><path d="M1 20a3 3 0 0 1 4-3M14 17a3 3 0 0 1 3 4" fill="none" stroke="#a8301c" stroke-width="1.400"/><path d="M22 2v20M20 5l2-3 2 3M20 19l2 3 2-3" fill="none" stroke="#a8301c" stroke-width="1.400"/></svg>
  <svg class="sp3" width="26" height="24" viewBox="0 0 26 24"><path d="M1 12q12-10 24 0-12 10-24 0z" fill="#b6bfbf" stroke="#8c989c"/><ellipse cx="13" cy="12" rx="5" ry="4" fill="#cfd5d5" stroke="#8c989c"/><path d="M5 21 20 3" stroke="#a8301c" stroke-width="1.400"/></svg>
  <svg class="sp2" width="26" height="26" viewBox="0 0 26 26"><path d="M12 10 24 1v16L12 25z" fill="#e8eff6" stroke="#6ea3e8"/><ellipse cx="19" cy="12" rx="1.500" ry="3" fill="#6ea3e8"/><path d="M1 2l13 7M1 7l13-3" stroke="#333"/><circle cx="2" cy="2" r="1.500" fill="none" stroke="#333"/><circle cx="2" cy="8" r="1.500" fill="none" stroke="#333"/></svg>
  <svg class="sp5" width="22" height="21"><use href="#i-pe"/></svg>
  <svg class="sp6" width="22" height="22" viewBox="0 0 22 22"><rect x="1" y="1" width="4" height="20" fill="#fedc7e" stroke="#887b40"/><rect x="6.500" y="4.500" width="14" height="14" fill="#dfe6ea" stroke="#6ea3e8"/><rect x="8" y="6" width="7" height="9" fill="#fff"/></svg>
  <svg class="sp6" width="15" height="15" viewBox="0 0 15 15"><rect x=".5" y=".5" width="14" height="14" fill="#fff" stroke="#65727a"/><path d="M3.500 4 7 7.500 3.500 11M8 4l3.500 3.500L8 11" fill="none" stroke="#4c8ad8" stroke-width="1.400"/></svg>
</div>

<div class="ctxmenu ctx1">
  <span class="gutter"></span>
  <div class="mitem r1">Создать</div><span class="msub a1"></span>
  <span class="msep s1"></span>
  <div class="hlrow h1"></div>
  <div class="mitem r2">Видимость</div><span class="msub a2"></span>
  <svg class="mico i1" width="14" height="17"><use href="#i-trash"/></svg>
  <div class="mitem r3">Удалить</div>
  <svg class="mico i2" width="16" height="16" viewBox="0 0 22 21"><use href="#i-pe"/></svg>
  <div class="mitem r4">Параметры...</div>
  <span class="msep s2"></span>
  <div class="mitem r5">Группы</div><span class="msub a5"></span>
  <span class="msep s3"></span>
  <div class="mitem r6">Перейти к элементам</div>
  <div class="mitem r7">Открыть в новом окне</div>
  <span class="msep s4"></span>
  <div class="mitem r8">Скрыть элемент</div>
  <span class="msep s5"></span>
  <div class="mitem r9">Вид</div><span class="msub a9"></span>
</div>

<div class="ctxmenu ctx2">
  <span class="gutter"></span>
  <div class="hlrow h2"></div>
  <div class="mitem q1">Погасить</div>
  <div class="mitem q2">Показать</div>
  <div class="mitem q3">Погасить только выбранные</div>
  <div class="mitem q4">Показать только выбранные</div>
  <div class="mitem q5">Показать всё</div>
</div>
<div class="ctip">Скрыть выбранные элементы</div>
<script src="https://cdn.jsdelivr.net/npm/bootstrap@5.3.0/dist/js/bootstrap.bundle.min.js"></script>
</body>
</html>
